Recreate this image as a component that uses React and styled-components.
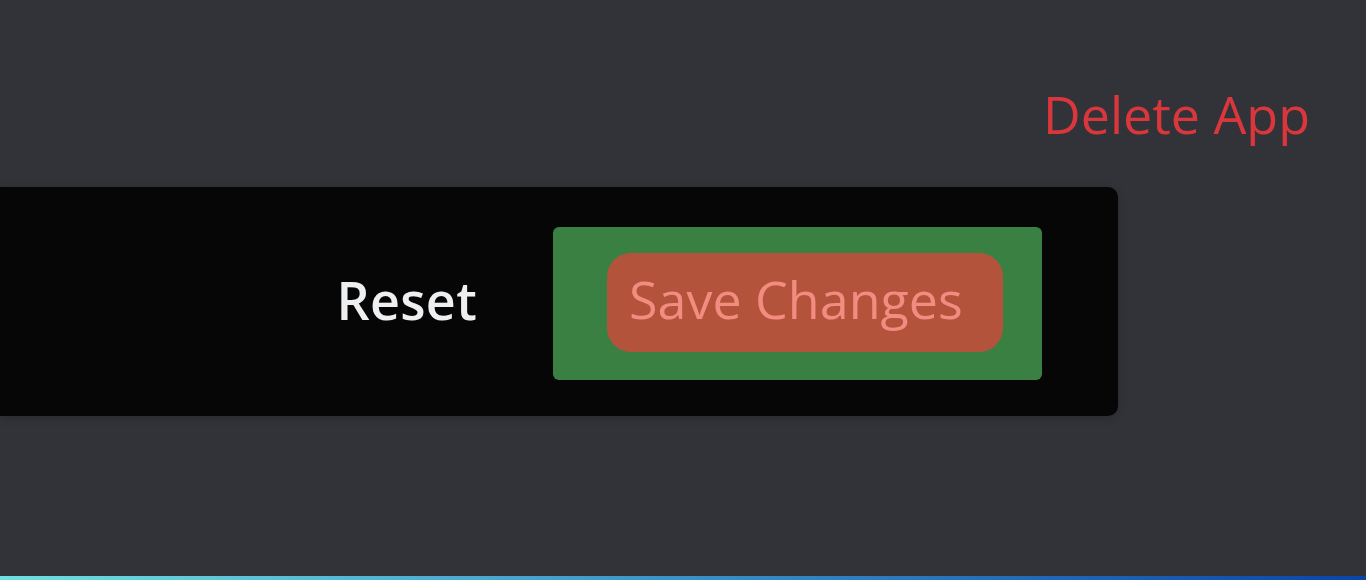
import React from 'react';
import styled, { createGlobalStyle } from 'styled-components';

const GlobalStyle = createGlobalStyle`
  html, body {
    margin: 0;
    padding: 0;
    background-color: #313338;
  }
  body {
    font-family: "Open Sans", "Noto Sans", sans-serif;
  }
`;

const Page = styled.div`
  min-height: 580px;
  display: flex;
  flex-direction: column;
  overflow: hidden;
`;

const Header = styled.div`
  display: flex;
  justify-content: flex-end;
  padding: 84px 56px 0 0;
`;

const DangerLink = styled.button`
  background: none;
  border: none;
  padding: 0;
  font-family: inherit;
  font-size: 52px;
  line-height: 60px;
  font-weight: 400;
  color: #da373c;
  cursor: pointer;
`;

const Notice = styled.div`
  margin-top: 43px;
  width: 1118px;
  height: 229px;
  box-sizing: border-box;
  background-color: #060607;
  border-radius: 0 10px 10px 0;
  box-shadow: 0 2px 10px rgba(0, 0, 0, 0.18);
  display: flex;
  justify-content: flex-end;
  align-items: center;
  gap: 76px;
  padding: 40px 76px 36px 0;
`;

const ResetButton = styled.button`
  background: none;
  border: none;
  padding: 0;
  margin-bottom: 8px;
  font-family: inherit;
  font-size: 52px;
  line-height: 60px;
  font-weight: 600;
  letter-spacing: 0.3px;
  color: #eeeff1;
  cursor: pointer;
`;

const SaveFrame = styled.div`
  display: flex;
  background-color: #3b8043;
  border-radius: 6px;
  padding: 26px 39px 28px 54px;
`;

const SaveButton = styled.button`
  border: none;
  background-color: #b3533b;
  border-radius: 24px;
  padding: 16px 0 23px 22px;
  width: 396px;
  text-align: left;
  font-family: inherit;
  font-size: 52px;
  line-height: 60px;
  font-weight: 400;
  color: #f28b80;
  cursor: pointer;
`;

const AccentBar = styled.div`
  margin-top: auto;
  height: 4px;
  background: linear-gradient(90deg, #6fe0e0 0%, #3a92c8 50%, #0a44a8 100%);
`;

export default function App() {
  return (
    <>
      <GlobalStyle />
      <Page>
        <Header>
          <DangerLink>Delete App</DangerLink>
        </Header>
        <Notice>
          <ResetButton>Reset</ResetButton>
          <SaveFrame>
            <SaveButton>Save Changes</SaveButton>
          </SaveFrame>
        </Notice>
        <AccentBar />
      </Page>
    </>
  );
}
